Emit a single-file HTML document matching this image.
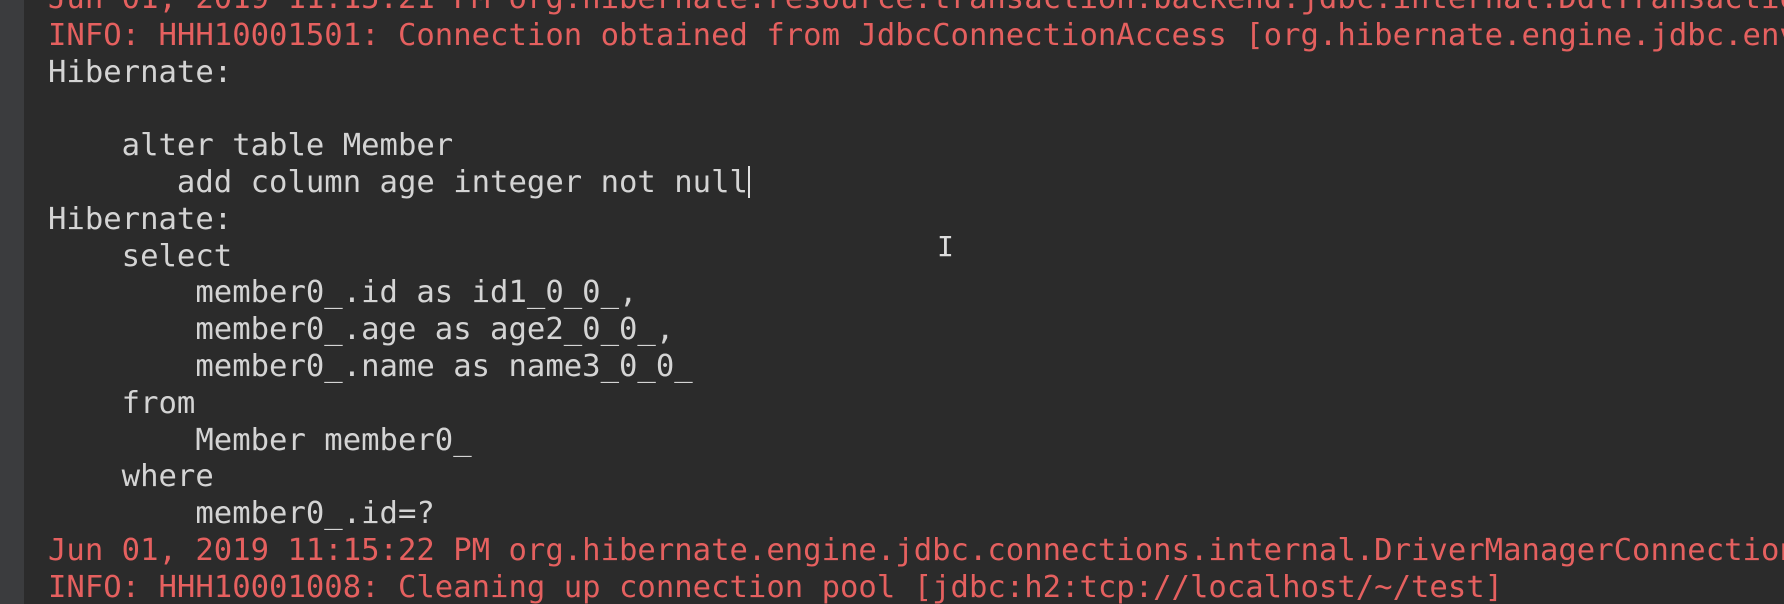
<!DOCTYPE html>
<html><head><meta charset="utf-8"><style>
html,body{margin:0;padding:0;width:1784px;height:604px;overflow:hidden;background:#2b2b2b}
.g{position:absolute;left:0;top:0;width:24px;height:604px;background:#3b3c3e}
.w{position:absolute;left:48px;top:0;width:1736px;height:604px;overflow:hidden}
pre{position:absolute;left:0;top:-19px;margin:0;font-family:"DejaVu Sans Mono","Liberation Mono",monospace;font-size:30.6px;line-height:36.8px;color:#d4d4d4;white-space:pre}
.r{color:#e5605f}
.c{display:inline-block;width:2px;height:32px;background:#e0e0e0;vertical-align:-6px}
.ib{position:absolute;left:937px;top:230px;color:#ddd;font-family:"DejaVu Sans Mono",monospace;font-size:28px}
</style></head><body>
<div class="g"></div>
<div class="w"><pre><span class="r">Jun 01, 2019 11:15:21 PM org.hibernate.resource.transaction.backend.jdbc.internal.DdlTransactionIsolatorNonJtaImpl</span>
<span class="r">INFO: HHH10001501: Connection obtained from JdbcConnectionAccess [org.hibernate.engine.jdbc.env.internal]</span>
Hibernate: 

    alter table Member 
       add column age integer not null<span class="c"></span>
Hibernate: 
    select
        member0_.id as id1_0_0_,
        member0_.age as age2_0_0_,
        member0_.name as name3_0_0_ 
    from
        Member member0_ 
    where
        member0_.id=?
<span class="r">Jun 01, 2019 11:15:22 PM org.hibernate.engine.jdbc.connections.internal.DriverManagerConnectionProviderImpl stop</span>
<span class="r">INFO: HHH10001008: Cleaning up connection pool [jdbc:h2:tcp://localhost/~/test]</span></pre></div>
<div class="ib">I</div>
</body></html>
